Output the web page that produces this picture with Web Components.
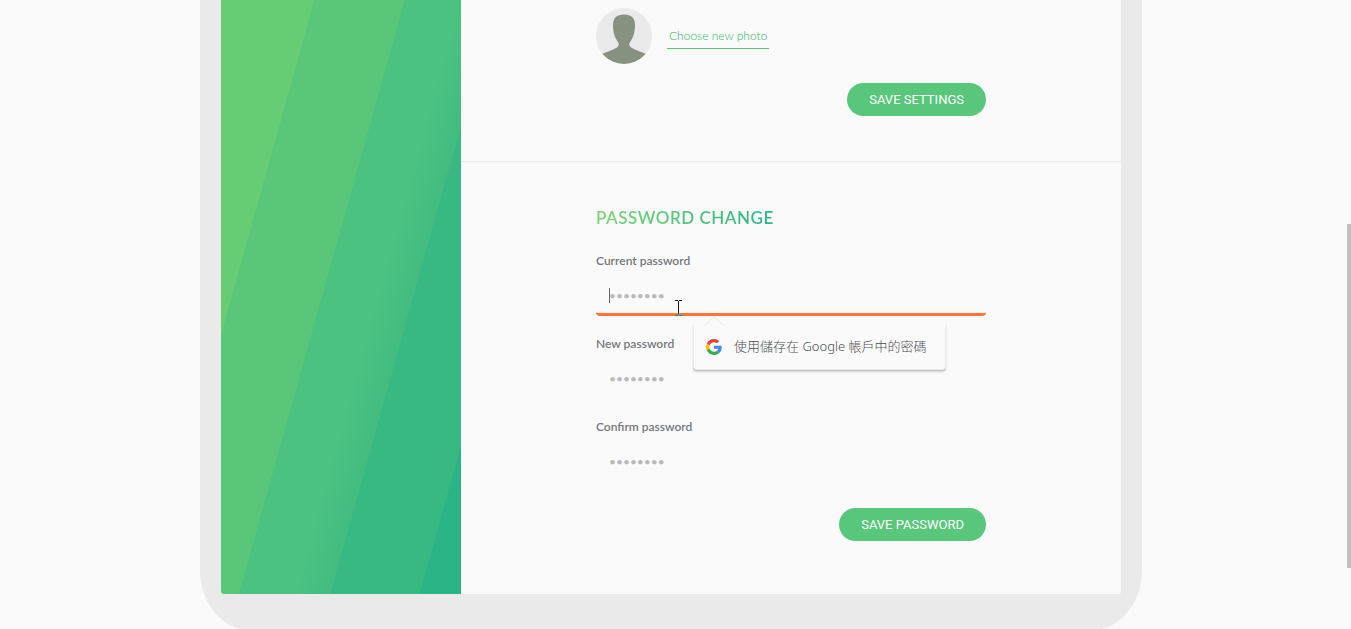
<!DOCTYPE html>
<html lang="en">
<head>
<meta charset="utf-8">
<meta name="viewport" content="width=device-width, initial-scale=1">
<title>Account settings</title>
<style>
html, body { margin: 0; height: 100%; background: #fafafa; overflow: hidden; }
body { font-family: Lato, "Liberation Sans", sans-serif; color: #74777b; }
</style>
</head>
<body>
<settings-page>
  <stripe-panel slot="side"></stripe-panel>
  <settings-section>
    <photo-picker></photo-picker>
    <pill-button slot="action">SAVE SETTINGS</pill-button>
  </settings-section>
  <settings-section heading="PASSWORD CHANGE">
    <password-field label="Current password" active><account-hint>使用儲存在 Google 帳戶中的密碼</account-hint></password-field>
    <password-field label="New password"></password-field>
    <password-field label="Confirm password"></password-field>
    <pill-button slot="action">SAVE PASSWORD</pill-button>
  </settings-section>
</settings-page>
<script>
function define(name, html, setup) {
  customElements.define(name, class extends HTMLElement {
    constructor() {
      super();
      const template = document.createElement('template');
      template.innerHTML = html;
      this.attachShadow({ mode: 'open' }).append(template.content.cloneNode(true));
    }
    connectedCallback() { if (setup) setup(this, this.shadowRoot); }
  });
}

define('settings-page', `
<style>
:host { display: block; padding-right: 9px; }
.frame { box-sizing: border-box; max-width: 942px; margin: 0 auto; padding: 0 21px 36px; background: #eaeaea; border-radius: 0 0 50px 50px / 0 0 60px 60px; }
.screen { display: grid; grid-template-columns: 240px 1fr; background: #fafafa; border-radius: 0 0 3px 3px; overflow: hidden; }
.thumb { position: fixed; right: 0; top: 224px; width: 4px; height: 344px; background: #c1c1c1; }
</style>
<div class="frame"><div class="screen"><slot name="side"></slot><main><slot></slot></main></div></div>
<div class="thumb"></div>`);

define('stripe-panel', `
<style>
:host { display: block; background: linear-gradient(105.6deg, #66cd75 90px, #59c67a 90px 177px, #4cc280 177px 228px, #42bc80 265px, #39b982 265px 351px, #2bb586 351px); }
</style>`);

define('settings-section', `
<style>
:host { display: block; padding: 8px 135px 45px; border-bottom: 1px solid #e9e9e9; }
:host([heading]) { padding: 44px 135px 53px; border: 0; }
h2 { width: max-content; margin: 0 0 23px; font-size: 17px; font-weight: 600; line-height: 24px; letter-spacing: 0.03em; background: linear-gradient(90deg, #7fd577, #2bb586); background-clip: text; -webkit-background-clip: text; color: transparent; }
.rows { display: flex; flex-direction: column; gap: 20px; }
.actions { display: flex; justify-content: flex-end; margin-top: 19px; }
:host([heading]) .actions { margin-top: 26px; }
</style>
<h2></h2>
<div class="rows"><slot></slot></div>
<div class="actions"><slot name="action"></slot></div>`, (el, root) => {
  const h = root.querySelector('h2');
  if (!h) return;
  if (el.hasAttribute('heading')) h.textContent = el.getAttribute('heading');
  else h.remove();
});

define('photo-picker', `
<style>
:host { display: flex; align-items: center; gap: 15px; }
svg { width: 56px; height: 56px; display: block; }
a { padding: 0 2px; font-size: 12px; font-weight: 300; line-height: 24px; color: #2fb866; text-decoration: none; border-bottom: 1px solid #59c67a; }
</style>
<svg viewBox="0 0 56 56" aria-hidden="true">
  <clipPath id="c"><circle cx="28" cy="28" r="28"/></clipPath>
  <circle cx="28" cy="28" r="28" fill="#eaeaea"/>
  <path clip-path="url(#c)" fill="#869380" d="M28 6.500C20.500 6.500 17 10 17 17c0 8 2 13 5 17 1 2 1 4-1 5.500-5 3-11 4.500-16 7V57h46V46.500c-5-2.500-11-4-16-7-2-1.500-2-3.500-1-5.500 3-4 5-9 5-17C39 10 35.500 6.500 28 6.500Z"/>
</svg>
<a href="#photo">Choose new photo</a>`);

define('pill-button', `
<style>
:host { display: block; }
button { height: 33px; margin: 0; padding: 0 22px 1px; border: 0; border-radius: 17px; background: #58c67b; color: #fff; font: 400 13px Roboto, "Liberation Sans", sans-serif; display: block; }
</style>
<button type="button"><slot></slot></button>`);

define('password-field', `
<style>
:host { display: block; position: relative; }
label { display: block; margin-bottom: 7px; font-size: 12px; font-weight: 600; line-height: 16px; }
input { box-sizing: border-box; display: block; width: 100%; height: 40px; margin: 0; padding: 2px 13px 0; border: 0 solid transparent; border-bottom: 3px solid transparent; border-radius: 4px; background: transparent; font: 12px Lato, sans-serif; color: #555; outline: 0; }
input::placeholder { color: #b9b9b9; opacity: 1; }
:host([active]) input { border-bottom-color: #ff7733; }
.caret, .pointer { display: none; position: absolute; }
:host([active]) .caret { display: block; left: 13px; top: 35px; width: 1px; height: 15px; background: #666; }
:host([active]) .pointer { display: block; left: 79px; top: 47px; }
</style>
<label for="field"></label>
<input id="field" type="password" placeholder="••••••••">
<span class="caret"></span>
<svg class="pointer" width="8" height="17" viewBox="0 0 8 17" shape-rendering="crispEdges" aria-hidden="true">
  <path fill="#111" d="M0 0h3v1H0zM4 0h3v1H4zM3 1h1v14H3z"/><path fill="#0f86b8" d="M0 15h3v1H0zM4 15h3v1H4zM3 13h1v2H3z"/>
</svg>
<slot></slot>`, (el, root) => {
  root.querySelector('label').textContent = el.getAttribute('label');
});

define('account-hint', `
<style>
:host { display: block; position: absolute; z-index: 1; left: 97px; top: 71px; }
.box { box-sizing: border-box; display: flex; align-items: center; height: 46px; padding: 0 18px 0 12px; gap: 12px; border: 1px solid #ececec; border-top-color: #fafafa; border-radius: 0 0 4px 4px; background: #fafafa; box-shadow: 0 1px 1px #b8b8b8, 0 3px 2px #e4e4e4; font-family: "Noto Sans", "Noto Sans CJK TC", sans-serif; font-size: 13px; line-height: 20px; font-weight: 300; color: #4c5055; white-space: nowrap; }
span { padding-bottom: 2px; }
.tip { position: absolute; left: 11px; top: -8px; }
.g { width: 16px; height: 16px; flex: none; }
</style>
<div class="box">
  <svg class="g" viewBox="0 0 48 48" aria-hidden="true">
    <path fill="#ea4335" d="M24 9.500c3.540 0 6.710 1.220 9.210 3.600l6.850-6.850C35.900 2.380 30.470 0 24 0 14.620 0 6.510 5.380 2.560 13.220l7.980 6.190C12.430 13.720 17.740 9.500 24 9.500z"/>
    <path fill="#4285f4" d="M46.980 24.550c0-1.570-.15-3.090-.38-4.550H24v9.020h12.940c-.58 2.960-2.260 5.480-4.780 7.180l7.730 6c4.510-4.180 7.090-10.360 7.090-17.650z"/>
    <path fill="#fbbc05" d="M10.530 28.590a14.500 14.500 0 0 1 0-9.180l-7.970-6.190a24 24 0 0 0 0 21.560z"/>
    <path fill="#34a853" d="M24 48c6.480 0 11.930-2.130 15.890-5.810l-7.730-6c-2.150 1.450-4.920 2.300-8.160 2.300-6.260 0-11.570-4.220-13.470-9.910l-7.980 6.190C6.510 42.620 14.620 48 24 48z"/>
  </svg>
  <span><slot></slot></span>
</div>
<svg class="tip" width="20" height="9" viewBox="0 0 20 9" aria-hidden="true"><path d="M1 9 10 1 19 9" fill="#fafafa" stroke="#e4e4e4"/></svg>`);
</script>
</body>
</html>
